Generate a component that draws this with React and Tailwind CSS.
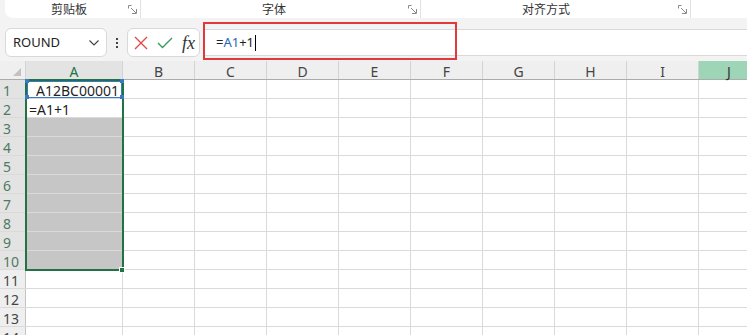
import React from "react";

const cols = ["B", "C", "D", "E", "F", "G", "H", "I"];
const rows = [1, 2, 3, 4, 5, 6, 7, 8, 9, 10, 11, 12, 13, 14];

const Launcher = () => (
  <svg width="9" height="9" viewBox="0 0 9 9" className="text-[#8a8a8a]">
    <path d="M0.5 0.5h3M0.5 0.5v3M3 3l5 5M8.5 4v4.5H4" stroke="currentColor" fill="none" strokeWidth="1" />
  </svg>
);

const Ribbon = () => (
  <div className="flex h-[18px] ml-[5px] bg-white rounded-bl-[8px] text-[12px] leading-[16px] text-[#333] font-['Noto_Sans_CJK_SC',sans-serif]">
    <div className="relative w-[136px] border-r border-[#e1e1e1] pl-[46px] pt-px">
      <span>剪贴板</span>
      <span className="absolute right-[3px] top-[5px]"><Launcher /></span>
    </div>
    <div className="relative w-[280px] border-r border-[#e1e1e1] pl-[121px] pt-px">
      <span>字体</span>
      <span className="absolute right-[3px] top-[5px]"><Launcher /></span>
    </div>
    <div className="relative w-[270px] border-r border-[#e1e1e1] pl-[101px] pt-px">
      <span>对齐方式</span>
      <span className="absolute right-[3px] top-[5px]"><Launcher /></span>
    </div>
    <div className="flex-1" />
  </div>
);

const FormulaBar = () => (
  <div className="relative flex items-center h-[29px] mt-[10px] font-['Noto_Sans',sans-serif]">
    <div className="ml-[5px] w-[102px] h-[29px] bg-white border border-[#d9d9d9] rounded-[6px] flex items-center justify-between pl-[7px] pr-[6px]">
      <span className="text-[13px] text-[#222]">ROUND</span>
      <svg width="12" height="8" viewBox="0 0 12 8">
        <path d="M1.5 1.5l4.5 4.5 4.5-4.5" stroke="#444" strokeWidth="1.2" fill="none" />
      </svg>
    </div>
    <div className="w-[20px] flex flex-col items-center gap-[2px]">
      <span className="w-[2px] h-[2px] bg-[#444]" />
      <span className="w-[2px] h-[2px] bg-[#444]" />
      <span className="w-[2px] h-[2px] bg-[#444]" />
    </div>
    <div className="w-[73px] h-[29px] bg-white border border-[#d9d9d9] rounded-[6px] flex items-center pl-[6px] gap-[9px]">
      <svg width="14" height="14" viewBox="0 0 14 14">
        <path d="M1 1l12 12M13 1L1 13" stroke="#e04a4a" strokeWidth="1.4" fill="none" />
      </svg>
      <svg width="16" height="12" viewBox="0 0 16 12">
        <path d="M1 6l4.5 4.5L15 1" stroke="#3a9a5b" strokeWidth="1.4" fill="none" />
      </svg>
      <span className="font-['Liberation_Serif',serif] italic text-[18px] text-[#333] leading-none">fx</span>
    </div>
    <div className="ml-[4px] flex-1 h-[27px] bg-white border-y border-[#d9d9d9] flex items-center pl-[12px] text-[13px]">
      <span className="text-[#222]">=</span>
      <span className="text-[#2069b3]">A1</span>
      <span className="text-[#222]">+1</span>
      <span className="w-px h-[16px] bg-black ml-px" />
    </div>
    <div className="absolute left-[203px] top-[-6px] w-[254px] h-[38px] border-2 border-[#e0393b]" />
  </div>
);

const Grid = () => (
  <div className="relative mt-[4px] bg-white font-['Noto_Sans',sans-serif]">
    <div className="flex h-[19px] bg-[#efefef] border-b border-[#ababab] text-[14px] leading-[21px] text-[#444]">
      <div className="relative w-[26px] border-r border-[#d4d4d4]">
        <svg width="8" height="8" viewBox="0 0 8 8" className="absolute right-[4px] bottom-[3px]">
          <path d="M8 0v8H0z" fill="#c2c2c2" />
        </svg>
      </div>
      <div className="w-[97px] bg-[#e3e3e3] border-r border-[#d4d4d4] text-center text-[#217346]">A</div>
      {cols.map((c) => (
        <div key={c} className="w-[72px] border-r border-[#d4d4d4] text-center">{c}</div>
      ))}
      <div className="flex-1 bg-[#9fd5b7] text-center text-[#333] pl-[12px]">J</div>
    </div>
    {rows.map((r) => (
      <div key={r} className="flex h-[19px] border-b border-[#dadada] text-[14px] leading-[21px]">
        <div className={`w-[26px] border-r border-[#c4c4c4] pl-[3px] ${r <= 10 ? "bg-[#e3e3e3] text-[#4f7a61]" : "bg-[#efefef] text-[#444]"}`}>
          {r}
        </div>
        <div className={`w-[97px] border-r ${r >= 3 && r <= 10 ? "bg-[#c6c6c6] border-[#b3b3b3]" : "border-[#dadada]"}`}>
          {r === 1 && <div className="text-right pr-[3px] text-[#1f1f1f]">A12BC00001</div>}
          {r === 2 && <div className="pl-[3px] text-[#1f1f1f]">=A1+1</div>}
        </div>
        {cols.map((c) => (
          <div key={c} className="w-[72px] border-r border-[#dadada]" />
        ))}
        <div className="flex-1" />
      </div>
    ))}
    <div className="absolute left-[25px] top-[18px] w-[99px] h-[192px] border-2 border-[#217346] pointer-events-none" />
    <div className="absolute left-[27px] top-[20px] w-[95px] h-[17px] border border-[#3a78c4]" />
    <div className="absolute left-[25px] top-[18px] w-[4px] h-[4px] bg-[#3a78c4]" />
    <div className="absolute left-[120px] top-[18px] w-[4px] h-[4px] bg-[#3a78c4]" />
    <div className="absolute left-[120px] top-[34px] w-[4px] h-[4px] bg-[#3a78c4]" />
    <div className="absolute left-[25px] top-[34px] w-[4px] h-[4px] bg-[#3a78c4]" />
    <div className="absolute left-[119px] top-[206px] w-[6px] h-[6px] bg-[#217346] border border-white" />
  </div>
);

export default function App() {
  return (
    <div className="w-[747px] h-[335px] overflow-hidden bg-[#f3f3f3]">
      <Ribbon />
      <FormulaBar />
      <Grid />
    </div>
  );
}
